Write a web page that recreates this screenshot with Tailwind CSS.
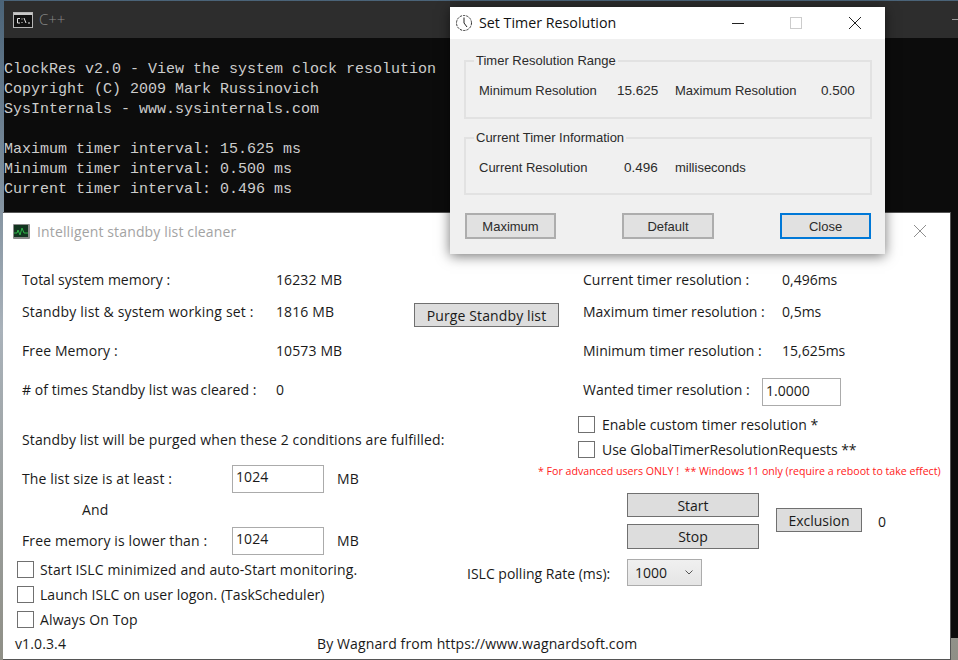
<!DOCTYPE html>
<html lang="en">
  <head>
    <meta charset="UTF-8" />
    <title>Timer tools</title>
    <script src="https://cdn.jsdelivr.net/npm/@tailwindcss/browser@4"></script>
  </head>
  <body class="relative w-[958px] h-[660px] overflow-hidden bg-linear-to-b from-[#4a6378] via-[#a9b2ba] to-[#8f8f86] font-['Open_Sans',sans-serif]">
    <!-- Console window -->
    <div class="absolute left-[4px] top-[1px] w-[954px] h-[637px] bg-[#0c0c0c]">
      <div class="flex items-center justify-between h-[37px] bg-[#2d2d2d] pl-[9px]">
        <div class="flex items-center">
          <svg width="20" height="16" viewBox="0 0 20 16">
            <rect x="0.5" y="0.5" width="19" height="15" fill="#111" stroke="#b5b5b5" />
            <rect x="1" y="1" width="18" height="2" fill="#c8c8c8" />
            <path d="M7 6.5H4.5V11H7M9 6.5v1M9 10v1M11 6l2 5M15 11h2" stroke="#e5e5e5" fill="none" />
          </svg>
          <span class="ml-[6px] text-[15px] font-light text-[#8a8a8a]">C++</span>
        </div>
        <span class="w-[6px] h-px bg-[#9a9a9a]"></span>
      </div>
      <pre class="mt-[22px] font-['Liberation_Mono',monospace] text-[15px] leading-[20px] text-[#cccccc]">ClockRes v2.0 - View the system clock resolution
Copyright (C) 2009 Mark Russinovich
SysInternals - www.sysinternals.com

Maximum timer interval: 15.625 ms
Minimum timer interval: 0.500 ms
Current timer interval: 0.496 ms</pre>
    </div>

    <!-- ISLC window -->
    <div class="absolute left-[3px] top-[212px] w-[948px] h-[448px] flex flex-col bg-white border-t border-r border-b border-[#555] text-[14px] tracking-[0.12px] text-[#1a1a1a]">
      <div class="flex items-center justify-between h-[36px] pl-[10px] pr-[23px]">
        <div class="flex items-center">
          <svg width="17" height="15" viewBox="0 0 17 15">
            <rect x="0" y="0" width="17" height="15" rx="1" fill="#8a8a8a" />
            <rect x="1" y="1" width="14" height="12" fill="#12351f" />
            <path d="M1 9h3l1-3 2 5 2-7 2 5h4" stroke="#2fb548" fill="none" />
          </svg>
          <span class="ml-[7px] text-[#a3a3a3] tracking-[0.14px]">Intelligent standby list cleaner</span>
        </div>
        <svg width="14" height="14" viewBox="0 0 14 14"><path d="M1 1l12 12M13 1L1 13" stroke="#8f8f8f" fill="none" /></svg>
      </div>
      <div class="flex">
        <!-- left column -->
        <div class="w-[460px] shrink-0 pl-[19px] pt-[20px]">
          <div class="flex h-[32px]"><span class="w-[254px] tracking-normal">Total system memory :</span><span>16232 MB</span></div>
          <div class="flex h-[39px] whitespace-nowrap">
            <span class="w-[254px] shrink-0 tracking-[0.18px]">Standby list &amp; system working set :</span><span class="w-[138px] shrink-0">1816 MB</span>
            <button class="w-[145px] h-[24px] mt-[2px] shrink-0 bg-[#dddddd] border border-[#707070]">Purge Standby list</button>
          </div>
          <div class="flex h-[39px]"><span class="w-[254px]">Free Memory :</span><span>10573 MB</span></div>
          <div class="flex h-[50px]"><span class="w-[254px] tracking-[0.05px]"># of times Standby list was cleared :</span><span>0</span></div>
          <div class="h-[34px]">Standby list will be purged when these 2 conditions are fulfilled:</div>
          <div class="flex items-center h-[30px] mt-[1px]">
            <span class="w-[210px] pb-[2px]">The list size is at least :</span>
            <span class="w-[92px] h-[28px] border border-[#ababab] px-[3px] leading-[22px]">1024</span>
            <span class="ml-[13px] pb-[2px]">MB</span>
          </div>
          <div class="pl-[60px] h-[32px] leading-[32px]">And</div>
          <div class="flex items-center h-[30px]">
            <span class="w-[210px] pb-[2px]">Free memory is lower than :</span>
            <span class="w-[92px] h-[28px] border border-[#ababab] px-[3px] leading-[22px]">1024</span>
            <span class="ml-[13px] pb-[2px]">MB</span>
          </div>
          <div class="-ml-[5px] mt-[5px] flex flex-col gap-[8px]">
            <label class="flex items-center gap-[6px] h-[17px]"><span class="w-[17px] h-[17px] border border-[#707070]"></span>Start ISLC minimized and auto-Start monitoring.</label>
            <label class="flex items-center gap-[6px] h-[17px] tracking-[0.05px]"><span class="w-[17px] h-[17px] border border-[#707070]"></span>Launch ISLC on user logon. (TaskScheduler)</label>
            <label class="flex items-center gap-[6px] h-[17px]"><span class="w-[17px] h-[17px] border border-[#707070]"></span>Always On Top</label>
          </div>
        </div>
        <!-- right column -->
        <div class="flex-1 pt-[20px] tracking-normal">
          <div class="flex h-[32px] ml-[120px]"><span class="w-[199px]">Current timer resolution :</span><span>0,496ms</span></div>
          <div class="flex h-[39px] ml-[120px]"><span class="w-[199px]">Maximum timer resolution :</span><span>0,5ms</span></div>
          <div class="flex h-[39px] ml-[120px]"><span class="w-[199px]">Minimum timer resolution :</span><span>15,625ms</span></div>
          <div class="flex h-[37px] ml-[120px]">
            <span class="w-[179px]">Wanted timer resolution :</span>
            <span class="w-[79px] h-[28px] -mt-[1px] border border-[#ababab] px-[3px] leading-[24px]">1.0000</span>
          </div>
          <div class="ml-[115px] flex flex-col gap-[8px]">
            <label class="flex items-center gap-[7px] h-[17px]"><span class="w-[17px] h-[17px] border border-[#707070]"></span>Enable custom timer resolution *</label>
            <label class="flex items-center gap-[7px] h-[17px] tracking-[-0.05px]"><span class="w-[17px] h-[17px] border border-[#707070]"></span>Use GlobalTimerResolutionRequests **</label>
          </div>
          <div class="ml-[75px] mt-[5px] h-[16px] leading-[16px] text-[10.63px] whitespace-pre text-[#ff2020]">* For advanced users ONLY !  ** Windows 11 only (require a reboot to take effect)</div>
          <div class="flex items-center ml-[164px] mt-[14px]">
            <div class="flex flex-col gap-[7px] w-[132px]">
              <button class="h-[24px] bg-[#dddddd] border border-[#707070]">Start</button>
              <button class="h-[25px] bg-[#dddddd] border border-[#707070]">Stop</button>
            </div>
            <button class="w-[86px] h-[24px] ml-[17px] -mt-[2px] bg-[#dddddd] border border-[#707070]">Exclusion</button>
            <span class="ml-[16px]">0</span>
          </div>
          <div class="flex items-center ml-[4px] mt-[10px]">
            <span class="w-[160px] mt-[2px]">ISLC polling Rate (ms):</span>
            <div class="flex items-center justify-between w-[75px] h-[27px] pl-[7px] pr-[8px] border border-[#acacac] bg-linear-to-b from-[#f0f0f0] to-[#e5e5e5]">
              <span>1000</span>
              <svg width="8" height="5" viewBox="0 0 8 5"><path d="M0.5 0.5L4 4l3.5-3.5" stroke="#555" fill="none" /></svg>
            </div>
          </div>
        </div>
      </div>
      <!-- footer -->
      <div class="flex mt-[5px] pl-[12px]">
        <span class="w-[302px]">v1.0.3.4</span>
        <span>By Wagnard from https://www.wagnardsoft.com</span>
      </div>
    </div>

    <!-- Set Timer Resolution dialog -->
    <div class="absolute left-[450px] top-[7px] w-[435px] h-[247px] flex flex-col bg-[#f0f0f0] shadow-[0_2px_12px_rgba(0,0,0,0.55)] font-['Liberation_Sans',sans-serif] text-[13px] text-[#2b2b2b]">
      <div class="relative flex items-center h-[32px] shrink-0 bg-white pl-[5px] font-['Open_Sans',sans-serif] text-[14.25px] text-[#111]">
        <svg width="18" height="18" viewBox="0 0 18 18">
          <circle cx="9" cy="9" r="7.5" fill="#fff" stroke="#333" stroke-dasharray="2.4 1" />
          <path d="M9 3.5V9l3 4" stroke="#222" fill="none" />
        </svg>
        <span class="ml-[6px]">Set Timer Resolution</span>
        <span class="ml-auto w-[12px] h-px bg-[#222] mr-[46px]"></span>
        <span class="w-[12px] h-[12px] border border-[#ccc] mr-[47px]"></span>
        <svg class="mr-[24px]" width="12" height="12" viewBox="0 0 12 12"><path d="M0 0l12 12M12 0L0 12" stroke="#222" fill="none" /></svg>
      </div>
      <div class="flex flex-col pl-[14px] pr-[13px] pt-[14px]">
        <fieldset class="h-[66px] border-2 border-[#e2e2e2] pl-[13px]">
          <legend class="-ml-[5px] px-[2px] leading-[16px]">Timer Resolution Range</legend>
          <div class="flex mt-[12px] leading-[20px]">
            <span class="w-[138px]">Minimum Resolution</span>
            <span class="w-[58px] text-[13.5px]">15.625</span>
            <span class="w-[146px]">Maximum Resolution</span>
            <span class="text-[13.5px]">0.500</span>
          </div>
        </fieldset>
        <fieldset class="h-[65px] mt-[11px] border-2 border-[#e2e2e2] pl-[13px]">
          <legend class="-ml-[5px] px-[2px] leading-[16px]">Current Timer Information</legend>
          <div class="flex mt-[12px] leading-[20px]">
            <span class="w-[145px]">Current Resolution</span>
            <span class="w-[51px] text-[13.5px]">0.496</span>
            <span>milliseconds</span>
          </div>
        </fieldset>
        <div class="flex justify-between mt-[18px] pl-[1px] pr-px">
          <button class="w-[91px] h-[26px] pt-px bg-[#e1e1e1] border-2 border-[#adadad]">Maximum</button>
          <button class="w-[92px] h-[26px] pt-px bg-[#e1e1e1] border-2 border-[#adadad]">Default</button>
          <button class="w-[91px] h-[26px] pt-px bg-[#e1e1e1] border-2 border-[#0078d7]">Close</button>
        </div>
      </div>
    </div>
  </body>
</html>
